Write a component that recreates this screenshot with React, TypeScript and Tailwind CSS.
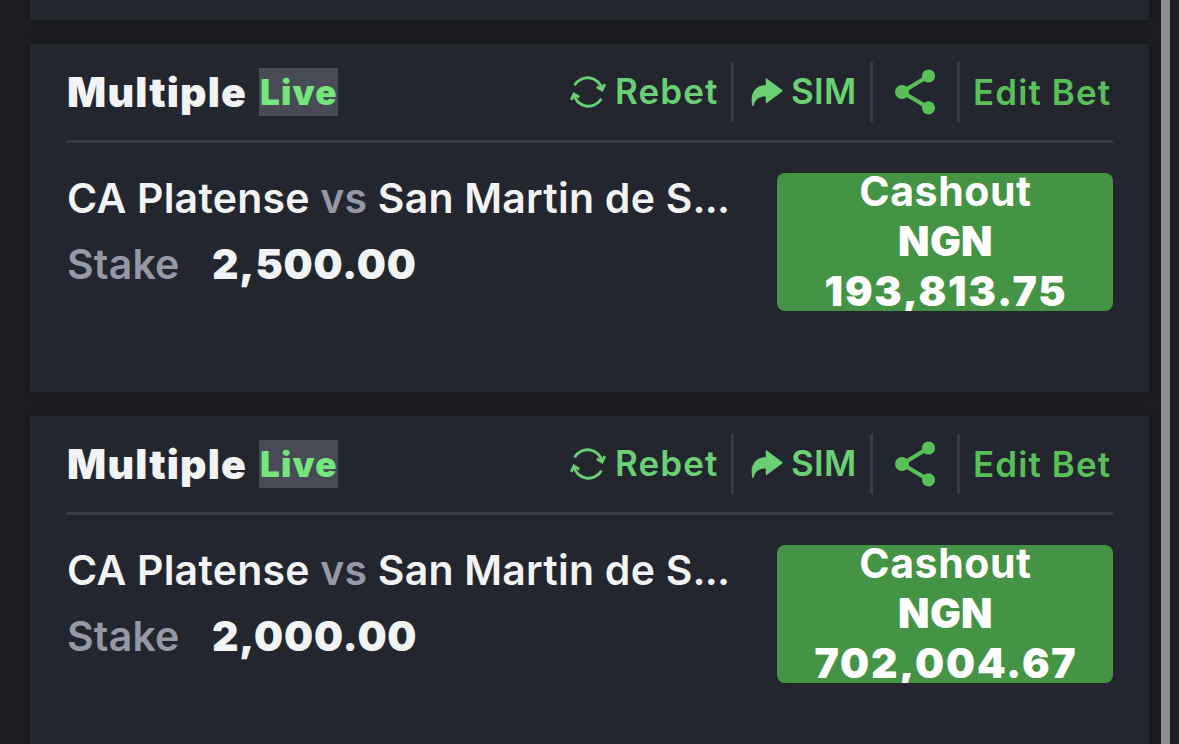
function RebetIcon() {
  return (
    <svg width="36" height="34" viewBox="0 0 36 34" fill="none" stroke="#6bcf74" strokeWidth="2.8" className="shrink-0">
      <path d="M4.6 10.2A15 15 0 0 1 32.2 14.6" />
      <path d="M26.8 11.8L32 15L34.8 9.2" />
      <path d="M31.4 23.8A15 15 0 0 1 3.8 19.4" />
      <path d="M1.2 24.8L4 19L9.2 22.2" />
    </svg>
  );
}

function ForwardIcon() {
  return (
    <svg width="32" height="29" viewBox="0 0 32 29" fill="#6bcf74" className="shrink-0">
      <path d="M14.8 .6Q15 0 15.8 .6L31.2 12Q32 12.7 31.2 13.4L15.8 25Q15 25.5 14.8 24.8V18.6C8.5 18.4 4.6 21 2.6 27.4Q2 28.6 1.2 27.4C-1.2 15.6 4.2 7.2 14.8 7.2Z" />
    </svg>
  );
}

function ShareIcon() {
  return (
    <svg width="41" height="46" viewBox="0 0 41 46" fill="#58bf59" className="shrink-0">
      <path d="M33.5 7L7 23L33.5 38.8" fill="none" stroke="#58bf59" strokeWidth="4" />
      <circle cx="33.5" cy="7" r="6.6" />
      <circle cx="7" cy="23" r="7" />
      <circle cx="33.5" cy="38.8" r="6.6" />
    </svg>
  );
}

function Divider() {
  return <div className="h-[60px] w-[3px] shrink-0 bg-[#383b46]" />;
}

type Bet = { stake: string; cashout: string };

function BetCard({ stake, cashout }: Bet) {
  return (
    <section className="h-[348px] shrink-0 bg-[#23262e] px-9 shadow-[0_0_10px_rgba(0,0,0,0.25)]">
      <header className="flex h-[99px] items-center border-b-[3px] border-[#383b46]">
        <h2 className="ml-px w-[192px] shrink-0 text-[41px] leading-[48px] font-black tracking-[1.2px] text-[#f2f3f5]">Multiple</h2>
        <span className="h-12 w-[79px] shrink-0 bg-[#484b55] pl-px text-[35px] leading-[48px] font-black tracking-[1.2px] whitespace-nowrap text-[#74e67c]">
          Live
        </span>
        <div className="ml-[232px] flex w-[161px] shrink-0 items-center gap-[9px] text-[35px] leading-[50px] font-semibold tracking-[1.1px] text-[#6bcf74]">
          <RebetIcon />
          <span className="pb-0.5">Rebet</span>
        </div>
        <Divider />
        <div className="flex w-[136px] shrink-0 items-center gap-2 pl-[17px] text-[35px] leading-[50px] font-semibold tracking-[0.3px] text-[#6bcf74]">
          <ForwardIcon />
          <span className="pb-0.5">SIM</span>
        </div>
        <Divider />
        <div className="flex w-[84px] shrink-0 justify-center">
          <ShareIcon />
        </div>
        <Divider />
        <span className="ml-[13px] text-[35px] leading-[50px] font-semibold tracking-[1.1px] whitespace-nowrap text-[#58bf59]">Edit Bet</span>
      </header>
      <div className="flex justify-between pt-[30px]">
        <div className="-mt-px w-[670px] pl-px">
          <p className="h-[52px] text-[41px] leading-[52px] font-semibold tracking-[0.22px] whitespace-nowrap text-[#f2f3f5]">
            CA Platense <span className="text-[#9699a5]">vs</span> San Martin de S<span className="tracking-[-0.8px]">...</span>
          </p>
          <div className="mt-3.5 flex h-[52px] text-[41px] leading-[52px]">
            <span className="w-[145px] font-semibold tracking-[0.2px] text-[#9699a5]">Stake</span>
            <span className="font-black tracking-[0.8px] text-[#f2f3f5]">{stake}</span>
          </div>
        </div>
        <button className="flex h-[138px] w-[336px] shrink-0 flex-col items-center justify-center overflow-hidden rounded-lg bg-[#459345] pb-0.5 text-[41px] leading-[50px] text-white">
          <span className="shrink-0 pl-px font-bold tracking-[0.6px]">Cashout</span>
          <span className="shrink-0 pl-px font-black tracking-[0.3px]">NGN</span>
          <span className="shrink-0 pl-0.5 font-black tracking-[1.8px]">{cashout}</span>
        </button>
      </div>
    </section>
  );
}

const bets: Bet[] = [
  { stake: "2,500.00", cashout: "193,813.75" },
  { stake: "2,000.00", cashout: "702,004.67" },
];

export default function App() {
  return (
    <main className="flex h-[744px] w-[1179px] overflow-hidden bg-[#1d1e22] font-['Inter',sans-serif]">
      <div className="ml-[30px] flex w-[1119px] shrink-0 flex-col gap-6">
        <div className="h-5 shrink-0 bg-[#23262e] shadow-[0_0_10px_rgba(0,0,0,0.25)]" />
        {bets.map((bet) => (
          <BetCard key={bet.cashout} {...bet} />
        ))}
      </div>
      <div className="ml-3 h-full w-[9px] shrink-0 bg-[#8c8d91]" />
    </main>
  );
}
